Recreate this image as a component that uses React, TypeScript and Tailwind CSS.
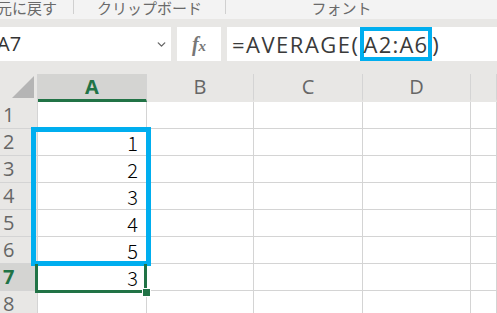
import { ChevronDown } from "lucide-react";

const ui = { fontFamily: '"Open Sans", "Noto Sans", "Noto Sans CJK JP", sans-serif' };
const cellFont = { fontFamily: '"Noto Sans CJK JP", "Noto Sans", sans-serif' };

const columns = ["A", "B", "C", "D", ""];
const values: Record<number, string> = { 2: "1", 3: "2", 4: "3", 5: "4", 6: "5", 7: "3" };

export default function App() {
  return (
    <div className="relative h-[313px] w-[497px] overflow-hidden bg-[#e8e7e5]" style={ui}>
      {/* ribbon group labels */}
      <div className="flex h-[19px] items-start bg-[#f3f3f3] text-[15px] leading-[16px] text-[#6a6a6a]">
        <div className="w-[77px] shrink-0 border-r border-[#d0d0d0] pl-0 -ml-[3px] h-[14px]" style={cellFont}>
          元に戻す
        </div>
        <div className="h-[14px] w-[152px] shrink-0 border-r border-[#d0d0d0] text-center" style={cellFont}>
          クリップボード
        </div>
        <div className="h-[14px] flex-1 pr-[40px] text-center" style={cellFont}>
          フォント
        </div>
      </div>

      {/* formula bar */}
      <div className="mt-[8px] flex h-[34px] gap-[6px]">
        <div className="flex w-[171px] items-center justify-between bg-white pr-[3px]">
          <span className="-ml-[3px] text-[20px] text-[#333]">A7</span>
          <ChevronDown size={13} strokeWidth={2.5} className="text-[#666]" />
        </div>
        <div className="flex w-[44px] items-center justify-center bg-white">
          <span className="text-[20px] font-bold italic text-[#777]" style={{ fontFamily: '"Liberation Serif", serif' }}>
            f<span className="text-[15px]">x</span>
          </span>
        </div>
        <div className="flex flex-1 items-center bg-white pl-[5px] text-[22px] text-[#3a3a3a]">
          <span className="tracking-[1.5px]">=AVERAGE(</span>
          <span className="border-4 border-[#00aeef] leading-[26px] tracking-[1.2px]">A2:A6</span>
          <span>)</span>
        </div>
      </div>

      {/* sheet */}
      <div className="mt-[13px] grid grid-cols-[38px_109px_107px_109px_108px_1fr]">
        {/* header row */}
        <div className="relative h-[28px] border-r border-[#d4d4d4]">
          <div className="absolute left-[12px] top-[2px] h-[22px] w-[22px] bg-[#b5b5b5] [clip-path:polygon(100%_0,100%_100%,0_100%)]" />
        </div>
        {columns.map((c, i) => (
          <div
            key={i}
            className={`flex h-[28px] items-center justify-center border-r border-[#d4d4d4] text-[20px] ${
              c === "A"
                ? "border-b-[3px] border-b-[#217346] bg-[#d4d4d2] font-bold text-[#217346]"
                : "border-b-[3px] border-b-transparent text-[#666]"
            }`}
          >
            {c}
          </div>
        ))}

        {[1, 2, 3, 4, 5, 6, 7, 8].map((r) => (
          <Row key={r} r={r} />
        ))}
      </div>

      {/* referenced range A2:A6 */}
      <div className="absolute left-[31px] top-[127px] h-[139px] w-[120px] border-[5px] border-[#00aeef]" />
      {/* active cell A7 */}
      <div className="absolute left-[35px] top-[264px] h-[29px] w-[112px] border-[3px] border-t-0 border-[#217346]" />
      <div className="absolute left-[142px] top-[288px] h-[9px] w-[9px] border border-white bg-[#217346]" />
    </div>
  );
}

function Row({ r }: { r: number }) {
  const active = r === 7;
  return (
    <>
      <div
        className={`flex h-[27px] items-end border-r border-b border-[#d4d4d4] pb-[1px] pl-[3px] text-[20px] leading-[24px] ${
          active ? "bg-[#d4d4d2] font-bold text-[#217346]" : "text-[#666]"
        }`}
      >
        {r}
      </div>
      {[0, 1, 2, 3, 4].map((c) => (
        <div
          key={c}
          className="flex h-[27px] items-end justify-end border-r border-b border-[#d4d4d4] bg-white pr-[8px] text-[20px] font-light leading-[24px] text-black"
          style={cellFont}
        >
          {c === 0 ? values[r] ?? "" : ""}
        </div>
      ))}
    </>
  );
}
